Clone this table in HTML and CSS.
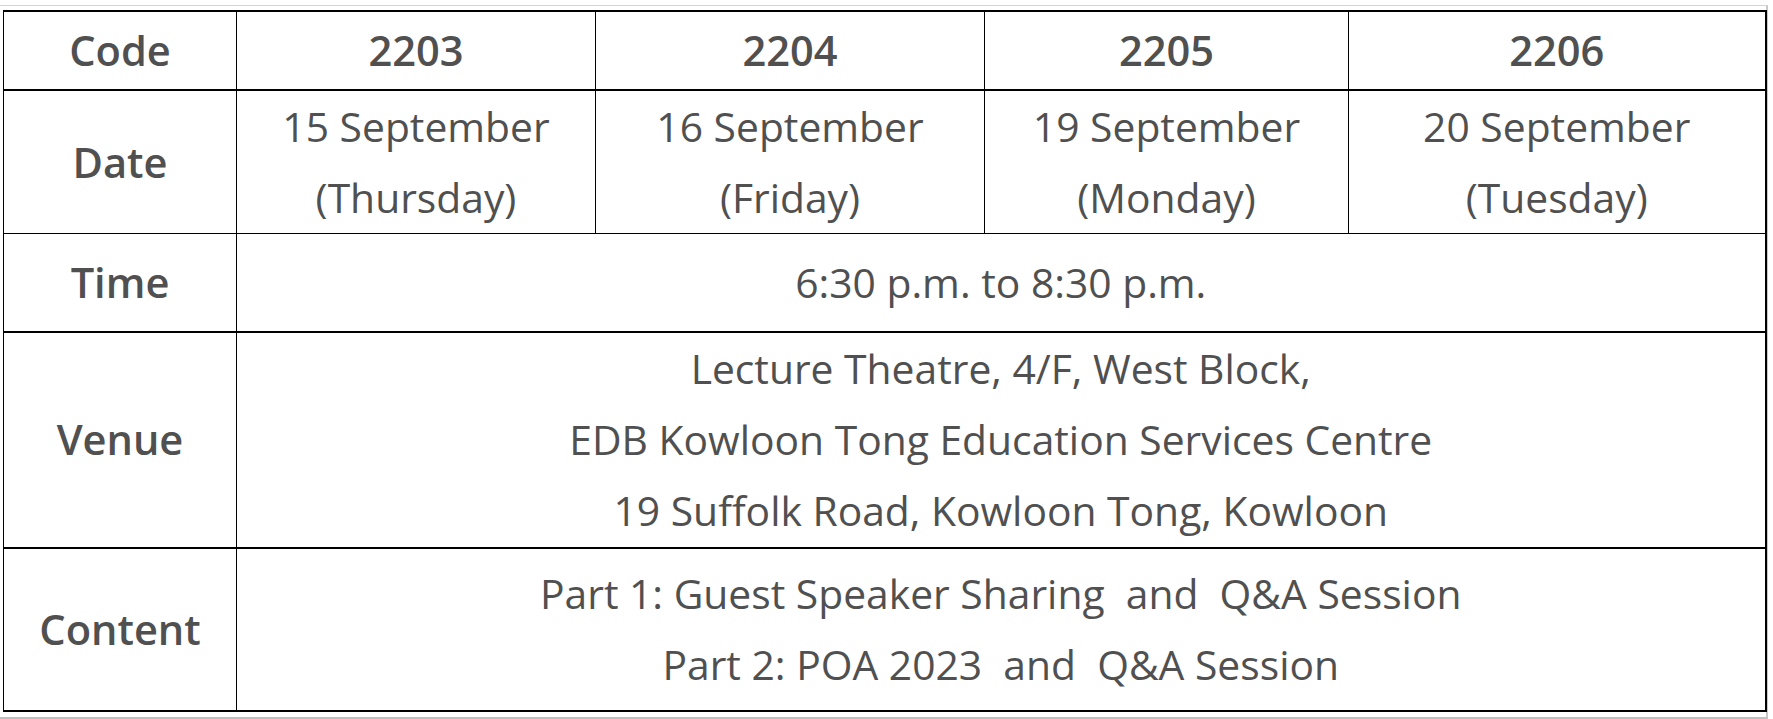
FILE: index.html
```html
<!DOCTYPE html>
<html lang="en">
<head>
<meta charset="utf-8">
<title>Schedule</title>
<link rel="stylesheet" href="styles.css">
</head>
<body>
<div class="frame">
  <table class="sched">
    <colgroup>
      <col class="c0"><col class="c1"><col class="c2"><col class="c3"><col class="c4">
    </colgroup>
    <tr class="r-code">
      <th class="lbl">Code</th>
      <th>2203</th>
      <th>2204</th>
      <th>2205</th>
      <th>2206</th>
    </tr>
    <tr class="r-date">
      <th class="lbl">Date</th>
      <td>15 September<br>(Thursday)</td>
      <td>16 September<br>(Friday)</td>
      <td>19 September<br>(Monday)</td>
      <td>20 September<br>(Tuesday)</td>
    </tr>
    <tr class="r-time">
      <th class="lbl">Time</th>
      <td colspan="4">6:30 p.m. to 8:30 p.m.</td>
    </tr>
    <tr class="r-venue">
      <th class="lbl">Venue</th>
      <td colspan="4">Lecture Theatre, 4/F, West Block,<br>EDB Kowloon Tong Education Services Centre<br>19 Suffolk Road, Kowloon Tong, Kowloon</td>
    </tr>
    <tr class="r-content">
      <th class="lbl">Content</th>
      <td colspan="4" class="pre">Part 1: Guest Speaker Sharing  and  Q&amp;A Session<br>Part 2: POA 2023  and  Q&amp;A Session</td>
    </tr>
  </table>
</div>
</body>
</html>
```

FILE: styles.css
```css
html, body {
  margin: 0;
  padding: 0;
  background: #ffffff;
}

.frame {
  width: 1768px;
  height: 714px;
  box-sizing: border-box;
  border-top: 1px solid #d4d4d4;
  border-right: 2px solid #c8c8c8;
  border-bottom: 2px solid #c0c0c0;
  margin-top: 5px;
  padding: 4px 0 0 3px;
}

.sched {
  border-collapse: collapse;
  table-layout: fixed;
  width: 1762px;
  font-family: "Open Sans", "Noto Sans", sans-serif;
  color: #505050;
  font-size: 40.8px;
  line-height: 71px;
  border-top: 2px solid #000;
  border-right: 2px solid #000;
  border-bottom: 2px solid #000;
  border-left: 1px solid #000;
}

.c0 { width: 233px; }
.c1 { width: 359px; }
.c2 { width: 389px; }
.c3 { width: 364px; }
.c4 { width: 417px; }

.sched th,
.sched td {
  border: 1px solid #000;
  padding: 0;
  text-align: center;
  vertical-align: middle;
  font-weight: 400;
}

.sched th {
  font-weight: 600;
  font-size: 41.6px;
}

.r-code th,
.r-code td { border-bottom-width: 2px; }
.r-time th,
.r-time td { border-bottom-width: 2px; }
.r-venue th,
.r-venue td { border-bottom-width: 2px; }

.r-code { height: 79px; }
.r-date { height: 143px; }
.r-time { height: 98px; }
.r-venue { height: 216px; }
.r-content { height: 163px; }

.pre { white-space: pre; }
```
